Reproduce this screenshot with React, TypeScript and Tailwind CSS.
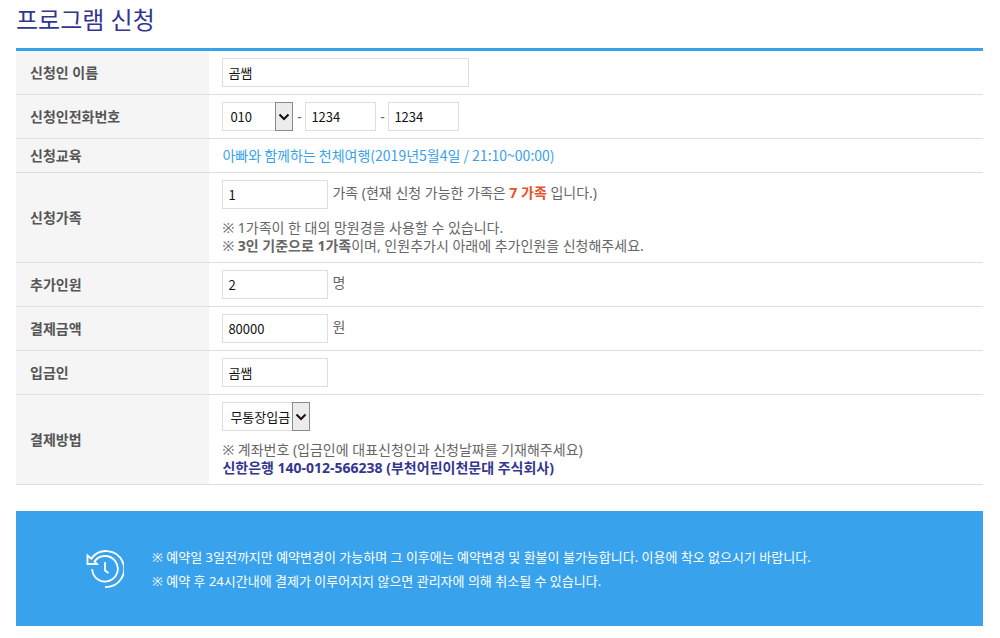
import type { ComponentProps, ReactNode } from "react";
import clsx from "clsx";

const Row = ({ label, htmlFor, children }: { label: string; htmlFor?: string; children: ReactNode }) => (
  <tr className="border-b border-[#dedede]">
    <th
      scope="row"
      className="w-1/5 bg-[#f5f5f5] px-[14px] text-left align-middle text-sm font-bold text-[#555]"
    >
      {htmlFor ? <label htmlFor={htmlFor}>{label}</label> : label}
    </th>
    <td className="px-[13px] py-[7px]">{children}</td>
  </tr>
);

const TextInput = ({ className, ...props }: ComponentProps<"input">) => (
  <input
    type="text"
    className={clsx(
      "h-[29px] border border-[#dedede] bg-white px-[5px] font-['Noto_Sans_CJK_KR',sans-serif] text-[13px] text-[#111]",
      className
    )}
    {...props}
  />
);

const SelectBox = ({ className, children, ...props }: ComponentProps<"select">) => (
  <span className="relative inline-flex">
    <select
      className={clsx(
        "h-[29px] appearance-none border border-[#dedede] bg-white pl-[7px] font-['Noto_Sans_CJK_KR',sans-serif] text-[13px] text-[#111]",
        className
      )}
      {...props}
    >
      {children}
    </select>
    <span className="pointer-events-none absolute inset-y-0 right-0 flex w-[18px] items-center justify-center border border-[#8a8a8a] bg-[#ececec]">
      <svg viewBox="0 0 12 8" className="h-2 w-3" fill="none" stroke="#111" strokeWidth="2">
        <path d="M1.500 1.500 6 6l4.500-4.500" />
      </svg>
    </span>
  </span>
);

const HistoryIcon = () => (
  <svg
    viewBox="0 0 38 38"
    className="size-[38px] shrink-0"
    fill="none"
    stroke="currentColor"
    strokeWidth="1.800"
    aria-hidden="true"
  >
    <path d="M19 37a18 18 0 1 0-13.600-28.300L1.500 5.500V14h9.500L8.500 11.500A12.800 12.800 0 1 1 6.200 19" />
    <path d="M19 12v8.500l3.500 2.500" />
  </svg>
);

export default function App() {
  return (
    <main className="pr-[17px] pb-3 pl-4 font-['Noto_Sans','Noto_Sans_CJK_KR',sans-serif] text-sm leading-[18px] text-[#666]">
      <h1 className="pt-1 pb-3 text-2xl leading-8 text-[#33368f]">프로그램 신청</h1>

      <form>
        <table className="w-full border-collapse border-t-[3px] border-[#38a1ec]">
          <tbody>
            <Row label="신청인 이름" htmlFor="name">
              <div className="flex">
                <TextInput id="name" defaultValue="곰쌤" className="w-[247px]" />
              </div>
            </Row>
            <Row label="신청인전화번호" htmlFor="phone1">
              <div className="flex items-center">
                <SelectBox id="phone1" className="w-[71px]">
                  <option>010</option>
                </SelectBox>
                <span className="w-3 text-center">-</span>
                <TextInput aria-label="전화번호 가운데 자리" defaultValue="1234" className="w-[71px]" />
                <span className="w-3 text-center">-</span>
                <TextInput aria-label="전화번호 끝자리" defaultValue="1234" className="w-[71px]" />
              </div>
            </Row>
            <Row label="신청교육">
              <p className="font-['Noto_Sans_CJK_KR',sans-serif] leading-[19px] text-[#38a1ec]">
                아빠와 함께하는 천체여행(2019년5월4일 / 21:10~00:00)
              </p>
            </Row>
            <Row label="신청가족" htmlFor="family">
              <div className="flex items-start gap-1">
                <TextInput id="family" defaultValue="1" className="w-[106px]" />
                <span className="leading-[26px]">
                  가족 (현재 신청 가능한 가족은 <strong className="text-[#e8502e]">7 가족</strong> 입니다.)
                </span>
              </div>
              <p className="mt-[10px]">※ 1가족이 한 대의 망원경을 사용할 수 있습니다.</p>
              <p>
                ※ <strong>3인 기준으로 1가족</strong>이며, 인원추가시 아래에 추가인원을 신청해주세요.
              </p>
            </Row>
            <Row label="추가인원" htmlFor="extra">
              <div className="flex items-start gap-1">
                <TextInput id="extra" defaultValue="2" className="w-[106px]" />
                <span className="leading-[26px]">명</span>
              </div>
            </Row>
            <Row label="결제금액" htmlFor="amount">
              <div className="flex items-start gap-1">
                <TextInput id="amount" defaultValue="80000" className="w-[106px]" />
                <span className="leading-[26px]">원</span>
              </div>
            </Row>
            <Row label="입금인" htmlFor="depositor">
              <div className="flex">
                <TextInput id="depositor" defaultValue="곰쌤" className="w-[106px]" />
              </div>
            </Row>
            <Row label="결제방법" htmlFor="method">
              <div className="flex">
                <SelectBox id="method" className="w-[88px]">
                  <option>무통장입금</option>
                </SelectBox>
              </div>
              <p className="mt-[10px]">※ 계좌번호 (입금인에 대표신청인과 신청날짜를 기재해주세요)</p>
              <p className="font-bold text-[#33368f]">신한은행 140-012-566238 (부천어린이천문대 주식회사)</p>
            </Row>
          </tbody>
        </table>
      </form>

      <section className="mt-[26px] flex items-center gap-7 bg-[#39a2ed] pt-[34px] pr-6 pb-[33px] pl-[70px] text-white">
        <HistoryIcon />
        <div className="text-[13px] leading-6">
          <p>※ 예약일 3일전까지만 예약변경이 가능하며 그 이후에는 예약변경 및 환불이 불가능합니다. 이용에 착오 없으시기 바랍니다.</p>
          <p>※ 예약 후 24시간내에 결제가 이루어지지 않으면 관리자에 의해 취소될 수 있습니다.</p>
        </div>
      </section>
    </main>
  );
}
